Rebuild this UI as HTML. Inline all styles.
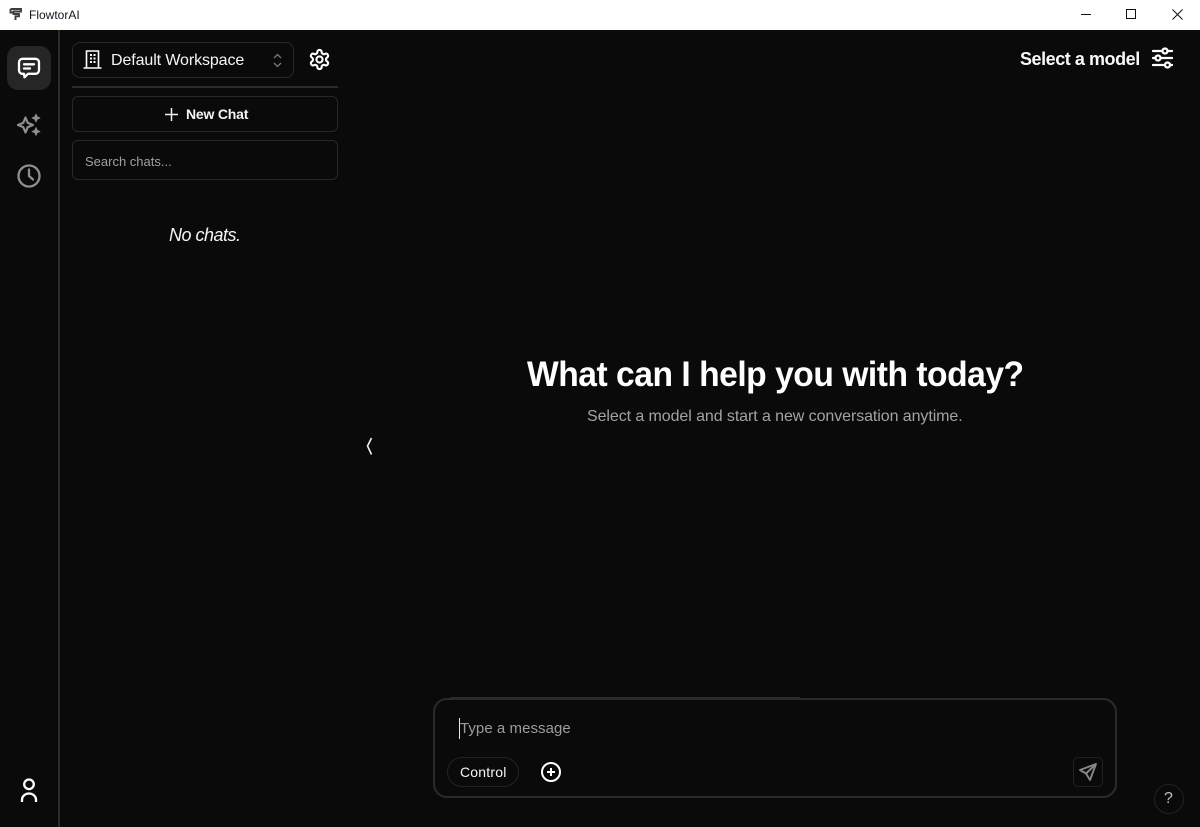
<!DOCTYPE html>
<html>
<head>
<meta charset="utf-8">
<style>
html,body{margin:0;padding:0;background:#0a0a0a;}
body{width:1200px;height:827px;overflow:hidden;position:relative;font-family:"Liberation Sans",sans-serif;color:#fff;}
.a{position:absolute;box-sizing:border-box;}
.t{position:absolute;white-space:nowrap;line-height:1;}
svg{position:absolute;overflow:visible;}
</style>
</head>
<body>
<div class="a" style="left:0;top:0;width:1200px;height:30px;background:#fff;"></div>
<svg style="left:9px;top:7px" width="14" height="15" viewBox="0 0 14 15" fill="none" stroke="#3c3c3c" stroke-width="1.900"><path d="M1.500 2h10.500v2.500H4.500v2.500h5.500v2.300H6.500V13"/><path d="M1.500 2v3.500H4.500"/></svg>
<div class="t" style="left:29px;top:9px;font-size:12px;color:#1a1020;">FlowtorAI</div>
<div class="a" style="left:1081px;top:14px;width:10px;height:1px;background:#111;"></div>
<div class="a" style="left:1126px;top:9px;width:10px;height:10px;border:1px solid #111;"></div>
<svg style="left:1172px;top:9px" width="11" height="11" viewBox="0 0 11 11" stroke="#111" stroke-width="1" fill="none"><path d="M.5.500l10 10M10.500.500l-10 10"/></svg>

<div class="a" style="left:58px;top:30px;width:2px;height:797px;background:#2b2b2b;"></div>
<div class="a" style="left:7px;top:46px;width:44px;height:44px;border-radius:11px;background:#262626;"></div>
<svg style="left:17px;top:57px" width="24" height="24" viewBox="0 0 24 24" fill="none" stroke="#fff" stroke-width="2.300" stroke-linecap="round" stroke-linejoin="round"><path d="M5.500 1.800h13a3.500 3.500 0 0 1 3.500 3.500v8a3.500 3.500 0 0 1-3.500 3.500h-7.500l-3.500 3.500-.5-3.500h-2A3.500 3.500 0 0 1 2 13.300v-8a3.500 3.500 0 0 1 3.500-3.500z"/><path d="M7 7.300h10M7 11.500h6"/></svg>
<svg style="left:17px;top:113px" width="24" height="24" viewBox="0 0 24 24" fill="none" stroke="#8f8f8f" stroke-width="2.200" stroke-linejoin="round"><path d="M8.500 4.500l2.200 5.300 5.300 2.200-5.300 2.200-2.200 5.300-2.200-5.300L1 12l5.300-2.200z"/><path d="M19 1l1.200 2.800L23 5l-2.800 1.200L19 9l-1.200-2.800L15 5l2.800-1.200z" fill="#8f8f8f" stroke-width=".8"/><path d="M19 14.500l1.200 2.800 2.800 1.200-2.800 1.200L19 22.500l-1.200-2.800-2.800-1.200 2.800-1.200z" fill="#8f8f8f" stroke-width=".8"/></svg>
<svg style="left:17px;top:164px" width="24" height="24" viewBox="0 0 24 24" fill="none" stroke="#8f8f8f" stroke-width="2.300" stroke-linecap="round" stroke-linejoin="round"><circle cx="12" cy="12" r="10.500"/><path d="M12 5.500V12l4 3.500"/></svg>
<svg style="left:17px;top:778px" width="24" height="26" viewBox="0 0 24 26" fill="none" stroke="#fff" stroke-width="2.300" stroke-linecap="butt"><circle cx="12" cy="6.300" r="4.800"/><path d="M5 24v-2.200a7 6.300 0 0 1 14 0V24"/></svg>

<div class="a" style="left:72px;top:42px;width:222px;height:36px;border:1px solid #282828;border-radius:8px;"></div>
<svg style="left:83px;top:50px" width="19" height="19" viewBox="0 0 19 19" fill="none" stroke="#fff" stroke-width="1.600"><path d="M3.500 18V1h12v17M.500 18h18"/><path d="M7 5h2M10.500 5h2M7 8.500h2M10.500 8.500h2M7 12h2M10.500 12h2" stroke-width="2"/></svg>
<div class="t" style="left:111px;top:53px;font-size:16px;color:#f5f5f5;letter-spacing:-.1px;">Default Workspace</div>
<svg style="left:272px;top:53px" width="11" height="15" viewBox="0 0 11 15" fill="none" stroke="#7a7a7a" stroke-width="1.300"><path d="M2 5l3.500-3.500L9 5M2 10l3.500 3.500L9 10"/></svg>
<svg style="left:308px;top:48px" width="23" height="23" viewBox="0 0 24 24" fill="none" stroke="#fff" stroke-width="2.200" stroke-linecap="round" stroke-linejoin="round"><path d="M12.220 2h-.44a2 2 0 0 0-2 2v.18a2 2 0 0 1-1 1.730l-.43.250a2 2 0 0 1-2 0l-.150-.080a2 2 0 0 0-2.730.730l-.220.380a2 2 0 0 0 .730 2.730l.150.100a2 2 0 0 1 1 1.720v.510a2 2 0 0 1-1 1.740l-.150.090a2 2 0 0 0-.730 2.730l.220.380a2 2 0 0 0 2.730.730l.150-.080a2 2 0 0 1 2 0l.430.250a2 2 0 0 1 1 1.730V20a2 2 0 0 0 2 2h.44a2 2 0 0 0 2-2v-.180a2 2 0 0 1 1-1.730l.430-.250a2 2 0 0 1 2 0l.150.080a2 2 0 0 0 2.730-.730l.220-.390a2 2 0 0 0-.730-2.730l-.150-.080a2 2 0 0 1-1-1.740v-.500a2 2 0 0 1 1-1.740l.150-.090a2 2 0 0 0 .730-2.730l-.220-.380a2 2 0 0 0-2.730-.730l-.150.080a2 2 0 0 1-2 0l-.430-.250a2 2 0 0 1-1-1.730V4a2 2 0 0 0-2-2z"/><circle cx="12" cy="12" r="3.200"/></svg>
<div class="a" style="left:72px;top:86px;width:266px;height:2px;background:#2b2b2b;"></div>

<div class="a" style="left:72px;top:96px;width:266px;height:36px;border:1px solid #282828;border-radius:6px;"></div>
<svg style="left:165px;top:108px" width="13" height="13" viewBox="0 0 13 13" stroke="#f0f0f0" stroke-width="1.500"><path d="M6.500 0v13M0 6.500h13"/></svg>
<div class="t" style="left:186px;top:107px;font-size:14px;font-weight:bold;color:#f5f5f5;letter-spacing:-.2px;">New Chat</div>

<div class="a" style="left:72px;top:140px;width:266px;height:40px;border:1px solid #282828;border-radius:6px;"></div>
<div class="t" style="left:85px;top:155px;font-size:13px;color:#a0a0a0;">Search chats...</div>

<div class="t" style="left:169px;top:226px;font-size:18px;font-style:italic;color:#f5f5f5;letter-spacing:-.5px;">No chats.</div>

<div class="t" style="left:1020px;top:50px;font-size:18px;font-weight:bold;color:#f8f8f8;letter-spacing:-.45px;">Select a model</div>
<svg style="left:1151px;top:47px" width="23" height="22" viewBox="0 0 23 22" fill="none" stroke="#fff" stroke-width="2.300" stroke-linecap="round"><path d="M2 4h9.500M16.500 4H21M2 11h2.500M9.500 11H21M2 18h12M19 18h2"/><circle cx="14" cy="4" r="2.500"/><circle cx="7" cy="11" r="2.500"/><circle cx="16.500" cy="18" r="2.500"/></svg>

<svg style="left:366px;top:437px" width="7" height="18" viewBox="0 0 7 18" fill="none" stroke="#f0f0f0" stroke-width="1.600"><path d="M5.500 1L1.500 9l4 8.500"/></svg>

<div class="t" style="left:527px;top:357px;font-size:35px;font-weight:bold;color:#fff;letter-spacing:-.5px;transform:scaleX(.96);transform-origin:0 0;">What can I help you with today?</div>
<div class="t" style="left:587px;top:409px;font-size:16px;color:#a3a3a3;letter-spacing:-.08px;">Select a model and start a new conversation anytime.</div>

<div class="a" style="left:450px;top:697px;width:350px;height:1px;background:#2a2a2a;"></div>
<div class="a" style="left:433px;top:698px;width:684px;height:100px;border:2px solid #2b2b2b;border-radius:14px;background:#0a0a0a;"></div>
<div class="a" style="left:459px;top:718px;width:1px;height:21px;background:#e8e8e8;"></div>
<div class="t" style="left:460px;top:721px;font-size:15px;color:#9c9c9c;letter-spacing:.05px;">Type a message</div>
<div class="a" style="left:447px;top:757px;width:72px;height:30px;border:1px solid #232323;border-radius:15px;"></div>
<div class="t" style="left:460px;top:765px;font-size:14px;color:#f5f5f5;letter-spacing:.2px;">Control</div>
<svg style="left:541px;top:762px" width="20" height="20" viewBox="0 0 20 20" fill="none" stroke="#fff" stroke-width="2"><circle cx="10" cy="10" r="9"/><path d="M10 6v8M6 10h8"/></svg>
<div class="a" style="left:1073px;top:757px;width:30px;height:30px;border:1px solid #222;border-radius:5px;"></div>
<svg style="left:1079px;top:763px" width="18" height="18" viewBox="0 0 18 18" fill="none" stroke="#868686" stroke-width="1.900" stroke-linejoin="round"><path d="M17 1L1 7l6 3.500L11 17z"/><path d="M17 1L7 10.500"/></svg>
<div class="a" style="left:1154px;top:784px;width:30px;height:30px;border:1px solid #222;border-radius:50%;"></div>
<div class="t" style="left:1164px;top:791px;font-size:16px;color:#c0c0c0;">?</div>
</body>
</html>
